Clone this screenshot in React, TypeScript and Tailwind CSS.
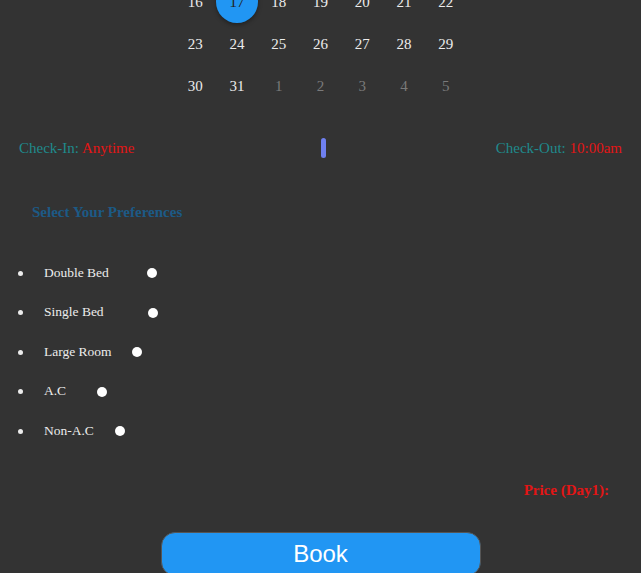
const weeks: { d: number; muted?: boolean; active?: boolean }[][] = [
  [{ d: 16 }, { d: 17, active: true }, { d: 18 }, { d: 19 }, { d: 20 }, { d: 21 }, { d: 22 }],
  [{ d: 23 }, { d: 24 }, { d: 25 }, { d: 26 }, { d: 27 }, { d: 28 }, { d: 29 }],
  [
    { d: 30 },
    { d: 31 },
    { d: 1, muted: true },
    { d: 2, muted: true },
    { d: 3, muted: true },
    { d: 4, muted: true },
    { d: 5, muted: true },
  ],
];

const prefs = [
  { label: "Double Bed", gap: "ml-[38px]" },
  { label: "Single Bed", gap: "ml-[44px]" },
  { label: "Large Room", gap: "ml-[20px]" },
  { label: "A.C", gap: "ml-[31px]" },
  { label: "Non-A.C", gap: "ml-[21px]" },
];

export default function App() {
  return (
    <div className="h-[573px] overflow-hidden bg-[#333333] font-['Liberation_Serif',serif] text-[15px]">
      {/* calendar tail */}
      <div className="mx-auto -mt-[19px] grid w-[292px] grid-cols-7">
        {weeks.flat().map((c, i) => (
          <div key={i} className="flex h-[42px] items-center justify-center">
            {c.active ? (
              <span className="flex h-[42px] w-[42px] items-center justify-center rounded-full bg-[#2196f3] text-[#222] shadow-[0_2px_4px_rgba(0,0,0,0.35)]">
                {c.d}
              </span>
            ) : (
              <span className={c.muted ? "text-[#7a7a7a]" : "text-[#ececec]"}>{c.d}</span>
            )}
          </div>
        ))}
      </div>

      <div className="mt-[30px] grid grid-cols-[1fr_auto_1fr] items-center px-[19px] text-[15px]">
        <span className="text-[#1f8a8c]">
          Check-In: <span className="text-[#e31515]">Anytime</span>
        </span>
        <span className="ml-[5px] h-[20px] w-[5px] rounded-full bg-[#6f80f0]" />
        <span className="text-right text-[#1f8a8c]">
          Check-Out: <span className="text-[#e31515]">10:00am</span>
        </span>
      </div>

      <h3 className="mt-[41px] pl-[32px] text-[15px] font-bold text-[#1c5a86]">Select Your Preferences</h3>

      <ul className="mt-[41px] flex flex-col gap-[21.5px] pl-[44px] text-[13.5px] text-[#ececec]">
        {prefs.map((p) => (
          <li key={p.label} className="relative flex h-[18px] items-center">
            <span className="absolute -left-[26px] h-[5px] w-[5px] rounded-full bg-[#ececec]" />
            <span>{p.label}</span>
            <span className={`${p.gap} h-[10px] w-[10px] rounded-full bg-white`} />
          </li>
        ))}
      </ul>

      <div className="mt-[39px] pr-[32px] text-right text-[15px] font-bold text-[#e31515]">Price (Day1):</div>

      <div className="mt-[30px] flex justify-center">
        <button className="h-[44px] w-[320px] rounded-[14px] border border-[#555] bg-[#2196f3] font-['Liberation_Sans',sans-serif] text-[24px] text-white">
          Book
        </button>
      </div>
    </div>
  );
}
